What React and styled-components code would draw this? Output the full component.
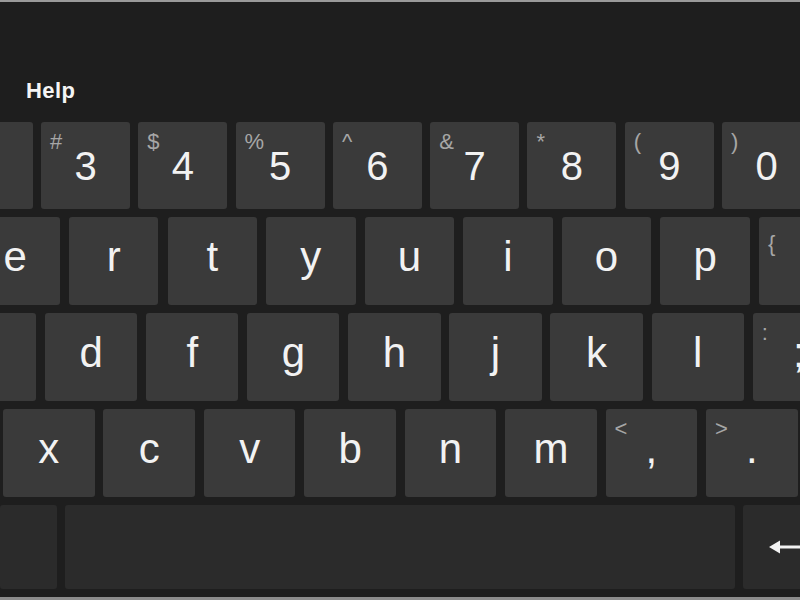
import React from "react";
import styled, { createGlobalStyle } from "styled-components";

const Global = createGlobalStyle`
  html, body { margin: 0; padding: 0; background: #1e1e1e; }
  body {
    width: 800px;
    height: 600px;
    overflow: hidden;
    font-family: "Liberation Sans", Arial, sans-serif;
  }
`;

const Board = styled.div`
  width: 800px;
  height: 600px;
  box-sizing: border-box;
  background: #1e1e1e;
  border-top: 2px solid #9a9a9a;
  border-bottom: 3px solid #8c8c8c;
  padding-bottom: 8px;
  overflow: hidden;
  display: flex;
  flex-direction: column;
`;

const Header = styled.div`
  flex: none;
  height: 120px;
  box-sizing: border-box;
  padding: 78px 0 0 26px;
`;

const Help = styled.span`
  display: inline-block;
  font-size: 22px;
  line-height: 22px;
  font-weight: 700;
  letter-spacing: 0.4px;
  color: #f4f4f4;
`;

const Rows = styled.div`
  display: flex;
  flex-direction: column;
  gap: 8px;
`;

const Row = styled.div`
  flex: none;
  display: flex;
  height: ${(p) => p.$h}px;
  gap: ${(p) => p.$gap}px;
  margin-left: ${(p) => p.$offset}px;
`;

const Key = styled.div`
  flex: none;
  position: relative;
  box-sizing: border-box;
  width: ${(p) => p.$w}px;
  height: 100%;
  border-radius: 3px;
  background: ${(p) => (p.$dark ? "#2b2b2b" : "#3a3a3a")};
  color: #f2f2f2;
  display: flex;
  justify-content: center;
  align-items: flex-start;
  padding-top: ${(p) => p.$pt || 0}px;
`;

const EnterKey = styled(Key)`
  justify-content: flex-start;
  align-items: center;
  padding-left: 26px;
`;

const Main = styled.span`
  font-size: ${(p) => p.$size}px;
  line-height: 1;
`;

const Shift = styled.span`
  position: absolute;
  left: 9px;
  top: ${(p) => p.$top || 9}px;
  font-size: 22px;
  line-height: 1;
  color: #a6a6a6;
`;

const rows = [
  {
    h: 87, gap: 8.3, offset: -56.3, w: 89, size: 40, pt: 24,
    keys: [["", "", "k2"], ["3", "#"], ["4", "$"], ["5", "%"], ["6", "^"], ["7", "&"], ["8", "*"], ["9", "("], ["0", ")"]],
  },
  {
    h: 88, gap: 9.07, offset: -29.6, w: 89.5, size: 42, pt: 19,
    keys: [["e"], ["r"], ["t"], ["y"], ["u"], ["i"], ["o"], ["p"], ["", "{", "kb", 16]],
  },
  {
    h: 88, gap: 8.8, offset: -56.1, w: 92.3, size: 42, pt: 19,
    keys: [["", "", "ks"], ["d"], ["f"], ["g"], ["h"], ["j"], ["k"], ["l"], [";", ":"]],
  },
  {
    h: 88, gap: 8.83, offset: 3, w: 91.6, size: 42, pt: 19,
    keys: [["x"], ["c"], ["v"], ["b"], ["n"], ["m"], [",", "<"], [".", ">"]],
  },
];

const EnterArrow = () => (
  <svg width="60" height="14" viewBox="0 0 60 14" aria-hidden="true">
    <polygon points="0,7 11,0.5 11,13.5" fill="#f2f2f2" />
    <rect x="9" y="5.5" width="51" height="3" fill="#f2f2f2" />
  </svg>
);

export default function App() {
  return (
    <>
      <Global />
      <Board>
        <Header>
          <Help>Help</Help>
        </Header>
        <Rows>
          {rows.map((r, i) => (
            <Row key={i} $h={r.h} $gap={r.gap} $offset={r.offset}>
              {r.keys.map(([main, shift, id, top]) => (
                <Key key={id || main} $w={r.w} $pt={r.pt}>
                  {shift && <Shift $top={top}>{shift}</Shift>}
                  {main && <Main $size={r.size}>{main}</Main>}
                </Key>
              ))}
            </Row>
          ))}
          <Row $h={84} $gap={8} $offset={0}>
            <Key $w={57} $dark />
            <Key $w={670} $dark />
            <EnterKey $w={100} $dark>
              <EnterArrow />
            </EnterKey>
          </Row>
        </Rows>
      </Board>
    </>
  );
}
